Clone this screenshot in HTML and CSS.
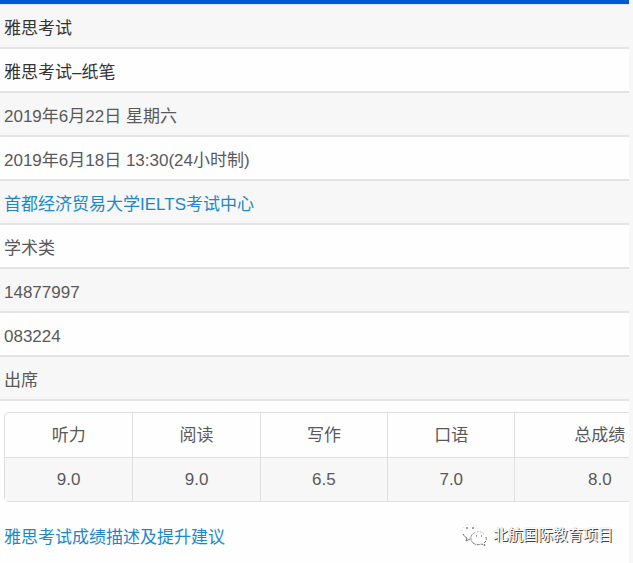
FILE: index.html
```
<!DOCTYPE html>
<html lang="zh-CN">
<head>
    <meta charset="UTF-8">
    <meta name="viewport" content="width=device-width, initial-scale=1.0">
    <title>雅思考试</title>
    <link rel="stylesheet" href="styles.css">
</head>
<body>
    <div class="container">
        <ul class="info">
            <li class="title">雅思考试</li>
            <li class="title">雅思考试–纸笔</li>
            <li>2019年6月22日 星期六</li>
            <li>2019年6月18日 13:30(24小时制)</li>
            <li><a href="#">首都经济贸易大学IELTS考试中心</a></li>
            <li>学术类</li>
            <li>14877997</li>
            <li>083224</li>
            <li>出席</li>
        </ul>
        <div class="scores">
            <table>
                <thead>
                    <tr>
                        <th>听力</th>
                        <th>阅读</th>
                        <th>写作</th>
                        <th>口语</th>
                        <th class="total">总成绩</th>
                    </tr>
                </thead>
                <tbody>
                    <tr>
                        <td>9.0</td>
                        <td>9.0</td>
                        <td>6.5</td>
                        <td>7.0</td>
                        <td>8.0</td>
                    </tr>
                </tbody>
            </table>
        </div>
        <footer class="footer">
            <a href="#">雅思考试成绩描述及提升建议</a>
            <div class="account">
                <svg class="logo" viewBox="0 0 28 26" fill="none" stroke="#777" stroke-width="1">
                    <path d="M1 9C2 4 6 1 11 2c3 0 5 2 6 5" stroke="#ddd" stroke-dasharray="1 2"/>
                    <path d="M2 12c1 2 2 3 4 4l-1 3 4-2"/>
                    <path d="M13 11c-4 2-4 7-1 10" stroke="#999"/>
                    <path d="M13 11c3-2 7-2 10 1" stroke="#bbb" stroke-dasharray="2 1"/>
                    <path d="M12 21c3 2 6 2 9 1l3 2-1-3c2-1 3-4 2-6" stroke-dasharray="3 1"/>
                    <path d="M5 6h2M11 6h2M15 14h1M20 14h1" stroke="#444"/>
                </svg>
                <span>北航国际教育项目</span>
            </div>
        </footer>
    </div>
</body>
</html>
```
FILE: styles.css
```
* {
    box-sizing: border-box;
}
body {
    margin: 0;
    background-color: #f7f7f7;
    color: #595959;
    font-family: "Liberation Sans", "Noto Sans CJK SC", sans-serif;
    font-size: 17px;
    line-height: 24px;
}
a {
    color: #1c88c7;
    text-decoration: none;
}
.container {
    min-height: 100vh;
    margin-right: 4px;
    overflow: hidden;
    background-color: #fefefe;
    border-top: 4px solid #0059d1;
}
.info {
    margin: 0;
    padding: 0;
    list-style: none;
    border-top: 1px solid #e4eaf4;
}
.info li {
    height: 44px;
    padding: 12px 4px 6px;
    border-bottom: 2px solid #e4e4e4;
}
.info li:nth-child(odd) {
    background-color: #f7f7f7;
}
.info .title {
    color: #333;
}
.scores {
    padding: 11px 0 0 4px;
}
table {
    width: 109%;
    table-layout: fixed;
    border: 1px solid #e0e0e0;
    border-radius: 5px;
    border-spacing: 0;
}
th, td {
    height: 44px;
    padding: 1px 0 0;
    border-left: 1px solid #e0e0e0;
    text-align: center;
    font-weight: normal;
}
th:first-child, td:first-child {
    border-left: none;
}
th.total {
    width: 25%;
}
td {
    background-color: #f7f7f7;
    border-top: 1px solid #e0e0e0;
}
.footer {
    display: flex;
    align-items: flex-start;
    justify-content: space-between;
    padding: 20px 16px 0 4px;
}
.footer > a {
    padding-top: 4px;
}
.account {
    display: flex;
    align-items: center;
    gap: 4px;
    color: #fff;
    font-size: 15px;
    text-shadow: 1px 1px 0 #444, 0 0 1px #999;
}
.logo {
    width: 28px;
    height: 26px;
}
```
